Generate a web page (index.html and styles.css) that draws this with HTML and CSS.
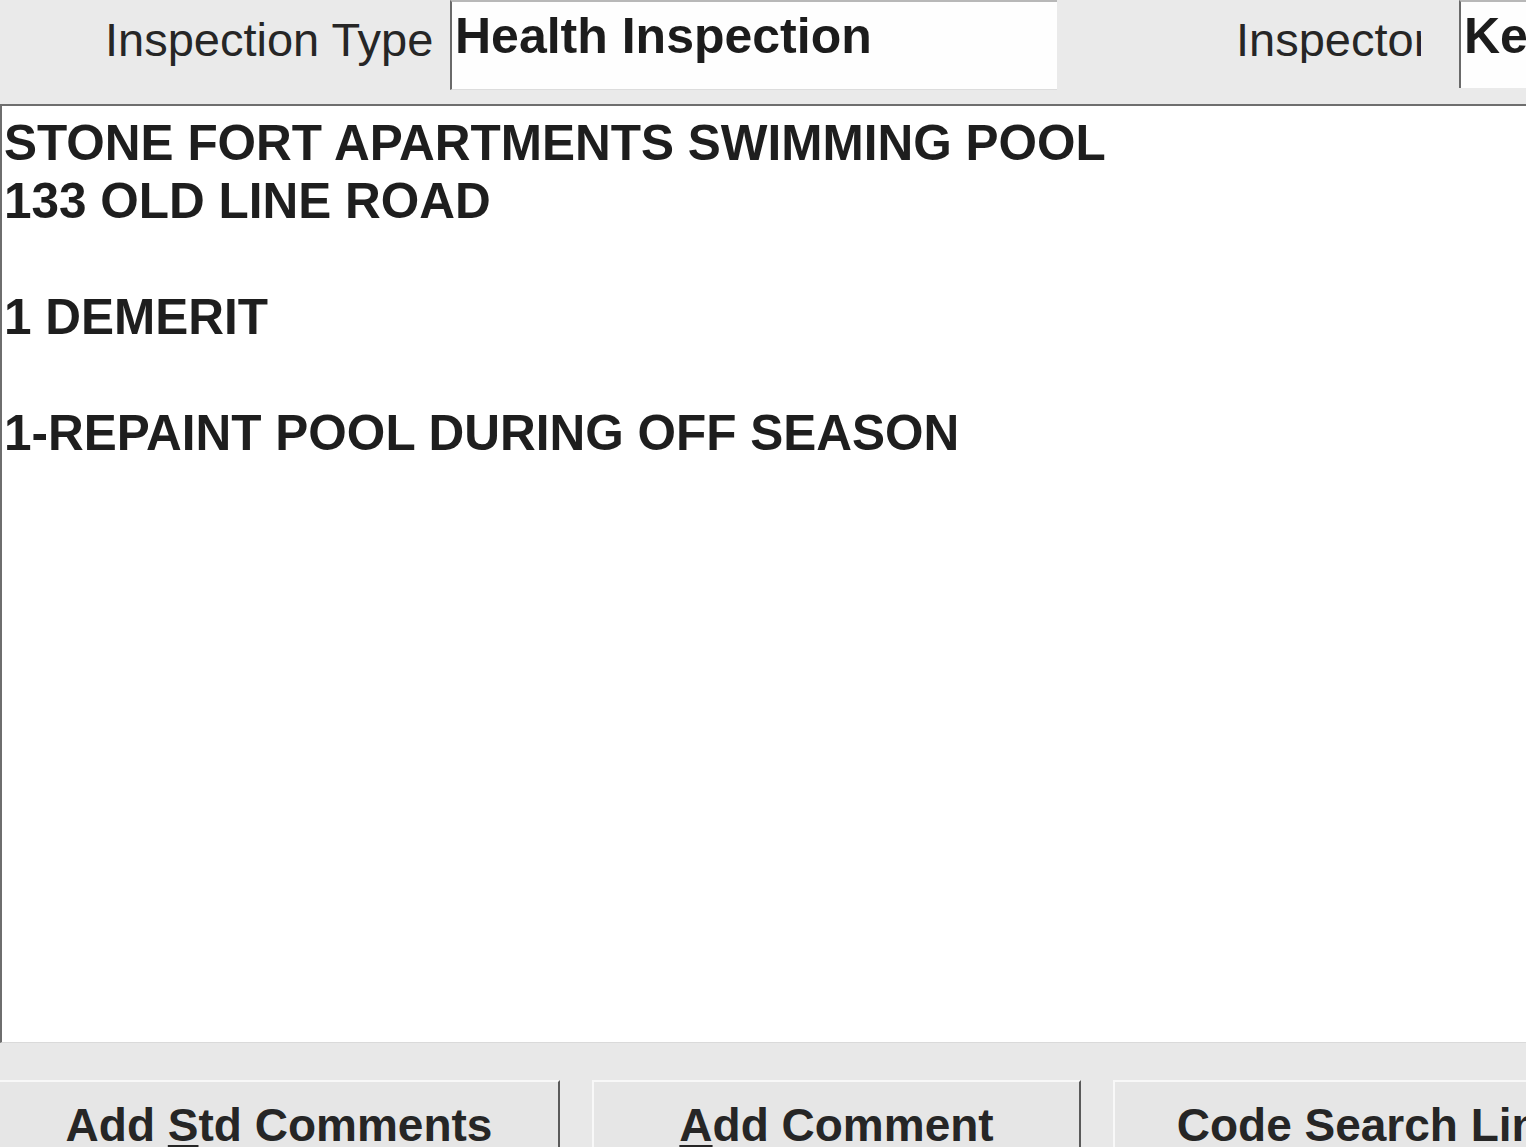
FILE: index.html
```html
<!DOCTYPE html>
<html>
<head>
<meta charset="utf-8">
<title>Inspection</title>
<link rel="stylesheet" href="styles.css">
</head>
<body>
<div class="screen">
  <div class="header">
    <div class="label label-type">Inspection Type</div>
    <div class="field field-type"><span class="value">Health Inspection</span></div>
    <div class="label label-inspector">Inspector</div>
    <div class="field field-inspector"><span class="value">Ke</span></div>
  </div>
  <div class="notes">
    <div class="line">STONE FORT APARTMENTS SWIMMING POOL</div>
    <div class="line">133 OLD LINE ROAD</div>
    <div class="line">&nbsp;</div>
    <div class="line">1 DEMERIT</div>
    <div class="line">&nbsp;</div>
    <div class="line">1-REPAINT POOL DURING OFF SEASON</div>
  </div>
  <div class="footer">
    <div class="btn btn-first">Add <u>S</u>td Comments</div>
    <div class="btn"><u>A</u>dd Comment</div>
    <div class="btn btn-last">Code Search Link</div>
  </div>
</div>
</body>
</html>
```
FILE: styles.css
```css
html, body {
  margin: 0;
  padding: 0;
}
body {
  width: 1526px;
  height: 1147px;
  overflow: hidden;
  background: #e9e9e9;
  font-family: "Liberation Sans", Arial, sans-serif;
  color: #202020;
}
.screen {
  width: 1526px;
  height: 1147px;
  overflow: hidden;
  display: flex;
  flex-direction: column;
}
.header {
  height: 104px;
  flex: none;
  display: flex;
  align-items: flex-start;
  background: #eaeaea;
  white-space: nowrap;
}
.label {
  flex: none;
  font-size: 47px;
  line-height: 1;
  padding-top: 16px;
  color: #262626;
}
.label-type {
  margin-left: 105px;
  width: 345px;
}
.label-inspector {
  margin-left: 179px;
  width: 185px;
  overflow: hidden;
}
.field {
  flex: none;
  height: 88px;
  background: #fefefe;
  border-top: 2px solid #b8b8b8;
  border-left: 2px solid #6a6a6a;
  box-sizing: border-box;
  padding-top: 9px;
  padding-left: 3px;
  overflow: hidden;
}
.field-type {
  width: 607px;
  height: 90px;
  border-bottom: 1px solid #dcdcdc;
}
.field-inspector {
  margin-left: 38px;
  width: 300px;
}
.value {
  font-size: 50px;
  font-weight: bold;
  line-height: 1;
  color: #1c1c1c;
}
.notes {
  height: 939px;
  flex: none;
  box-sizing: border-box;
  background: #ffffff;
  border-top: 2px solid #6e6e6e;
  border-left: 2px solid #6e6e6e;
  border-bottom: 1px solid #dadada;
  padding: 8px 0 0 2px;
  font-size: 49.5px;
  line-height: 58px;
  font-weight: bold;
  color: #1e1e1e;
  white-space: nowrap;
}
.footer {
  flex: 1;
  display: flex;
  gap: 32px;
  padding-top: 37px;
  background: #e8e8e8;
  white-space: nowrap;
}
.btn {
  width: 489px;
  flex: none;
  height: 80px;
  box-sizing: border-box;
  background: #e6e6e6;
  border-top: 2px solid #f8f8f8;
  border-left: 2px solid #f8f8f8;
  border-right: 2px solid #5a5a5a;
  padding-top: 20px;
  text-align: center;
  font-size: 46px;
  font-weight: bold;
  line-height: 1;
  color: #262626;
}
.btn-first {
  width: 560px;
  border-left: none;
}
.btn-last {
  width: 516px;
}
.btn u {
  text-decoration-thickness: 3px;
  text-underline-offset: 4px;
}
```
